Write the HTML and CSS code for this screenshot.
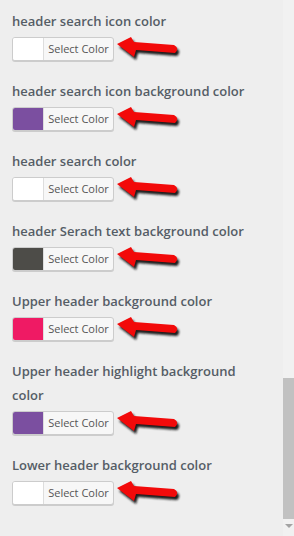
FILE: index.html
```html
<!DOCTYPE html>
<html lang="en">
<head>
  <meta charset="UTF-8">
  <title>Header colors</title>
  <link rel="stylesheet" href="styles.css">
</head>
<body>
  <div class="panel">
    <div class="options">
      <div class="option">
        <span class="option-title">header search icon color</span>
        <div class="picker-row">
          <button type="button" class="picker"><span class="swatch white"></span><span class="picker-label">Select Color</span></button>
          <svg class="arrow" viewBox="0 0 70 28" width="70" height="28"><use href="#arrow-shape"/></svg>
        </div>
      </div>
      <div class="option">
        <span class="option-title">header search icon background color</span>
        <div class="picker-row">
          <button type="button" class="picker"><span class="swatch purple"></span><span class="picker-label">Select Color</span></button>
          <svg class="arrow" viewBox="0 0 70 28" width="70" height="28"><use href="#arrow-shape"/></svg>
        </div>
      </div>
      <div class="option">
        <span class="option-title">header search color</span>
        <div class="picker-row">
          <button type="button" class="picker"><span class="swatch white"></span><span class="picker-label">Select Color</span></button>
          <svg class="arrow" viewBox="0 0 70 28" width="70" height="28"><use href="#arrow-shape"/></svg>
        </div>
      </div>
      <div class="option">
        <span class="option-title">header Serach text background color</span>
        <div class="picker-row">
          <button type="button" class="picker"><span class="swatch dark"></span><span class="picker-label">Select Color</span></button>
          <svg class="arrow" viewBox="0 0 70 28" width="70" height="28"><use href="#arrow-shape"/></svg>
        </div>
      </div>
      <div class="option">
        <span class="option-title">Upper header background color</span>
        <div class="picker-row">
          <button type="button" class="picker"><span class="swatch pink"></span><span class="picker-label">Select Color</span></button>
          <svg class="arrow" viewBox="0 0 70 28" width="70" height="28"><use href="#arrow-shape"/></svg>
        </div>
      </div>
      <div class="option">
        <span class="option-title">Upper header highlight background color</span>
        <div class="picker-row">
          <button type="button" class="picker"><span class="swatch purple"></span><span class="picker-label">Select Color</span></button>
          <svg class="arrow" viewBox="0 0 70 28" width="70" height="28"><use href="#arrow-shape"/></svg>
        </div>
      </div>
      <div class="option">
        <span class="option-title">Lower header background color</span>
        <div class="picker-row">
          <button type="button" class="picker"><span class="swatch white"></span><span class="picker-label">Select Color</span></button>
          <svg class="arrow" viewBox="0 0 70 28" width="70" height="28"><use href="#arrow-shape"/></svg>
        </div>
      </div>
    </div>
    <div class="scrollbar">
      <div class="thumb"></div>
      <div class="scroll-down"></div>
    </div>
  </div>

  <svg width="0" height="0" class="defs">
    <defs>
      <filter id="arrow-shadow" x="-20%" y="-30%" width="140%" height="170%">
        <feGaussianBlur stdDeviation="1"/>
      </filter>
      <g id="arrow-shape">
        <path d="M3 10 L17 3 L20 8 L60 11 Q66 14 61 19 L22 16 L20 23 Z" fill="#1a1a1a" transform="translate(2 3)" filter="url(#arrow-shadow)"/>
        <path d="M3 10 L17 3 L20 8 L60 11 Q66 14 61 19 L22 16 L20 23 Z" fill="#f20a0a"/>
      </g>
    </defs>
  </svg>
</body>
</html>
```

FILE: styles.css
```css
body {
  margin: 0;
  height: 536px;
  overflow: hidden;
  background: #eeeeee;
  font-family: "Open Sans", "Liberation Sans", sans-serif;
}
.defs {
  position: absolute;
}
.panel {
  display: flex;
  height: 536px;
}
.options {
  flex: 1;
  padding: 9px 0 0 12px;
}
.option {
  margin-bottom: 18px;
}
.option-title {
  display: block;
  font-size: 13px;
  font-weight: 600;
  line-height: 24px;
  color: #555d66;
  padding-right: 20px;
}
.picker-row {
  display: flex;
  align-items: flex-start;
  height: 24px;
  margin-top: 4px;
}
.picker {
  display: flex;
  align-items: stretch;
  height: 24px;
  width: 102px;
  padding: 0;
  border: 1px solid #cccccc;
  border-radius: 3px;
  background: #f7f7f7;
  box-shadow: 0 1px 0 #cccccc;
  overflow: hidden;
  font-family: "Open Sans", "Liberation Sans", sans-serif;
}
.swatch {
  width: 30px;
  border-right: 1px solid #dddddd;
}
.swatch.white { background: #ffffff; }
.swatch.purple { background: #7b4fa0; }
.swatch.dark { background: #4d4c48; }
.swatch.pink { background: #ef1a64; }
.picker-label {
  flex: 1;
  font-size: 11px;
  line-height: 22px;
  color: #555555;
  text-align: center;
}
.arrow {
  flex-shrink: 0;
  margin-top: -3px;
}
.scrollbar {
  width: 11px;
  background: #f1f1f1;
  display: flex;
  flex-direction: column;
}
.thumb {
  margin-top: 378px;
  height: 141px;
  background: #c1c1c1;
}
.scroll-down {
  width: 0;
  height: 0;
  margin: 5px auto 0;
  border-left: 4px solid transparent;
  border-right: 4px solid transparent;
  border-top: 4px solid #a3a3a3;
}
```
